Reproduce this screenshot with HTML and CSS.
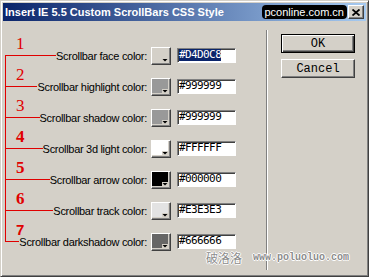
FILE: index.html
```html
<!DOCTYPE html>
<html>
<head>
<meta charset="utf-8">
<title>Insert IE 5.5 Custom ScrollBars CSS Style</title>
<link rel="stylesheet" href="styles.css">
</head>
<body>

<div class="win">
    <div class="titlebar">
        <span class="title">Insert IE 5.5 Custom ScrollBars CSS Style</span>
        <span class="badge">pconline.com.cn</span>
        <span class="close">
            <svg width="8" height="7" viewBox="0 0 8 7"><path d="M0.5 0.5 L7.5 6.5 M7.5 0.5 L0.5 6.5" stroke="#000" stroke-width="1.8"/></svg>
        </span>
    </div>

    <div class="main">
        <div class="form">
            <div class="tree">
                <div class="row">
                    <div class="lead"><span class="num">1</span></div>
                    <span class="label">Scrollbar face color:</span>
                    <span class="swatch"><svg width="16" height="14"><path d="M0 0 H16 V10 H10 V14 H0 Z" fill="#D4D0C8"/><path d="M10.5 11 H15.5 L13 13.5 Z" fill="#000"/></svg></span>
                    <span class="field"><span class="sel">#D4D0C8</span></span>
                </div>
                <div class="row">
                    <div class="lead"><span class="num">2</span></div>
                    <span class="label">Scrollbar highlight color:</span>
                    <span class="swatch"><svg width="16" height="14"><path d="M0 0 H16 V10 H10 V14 H0 Z" fill="#999999"/><path d="M10.5 11 H15.5 L13 13.5 Z" fill="#000"/></svg></span>
                    <span class="field">#999999</span>
                </div>
                <div class="row">
                    <div class="lead"><span class="num">3</span></div>
                    <span class="label">Scrollbar shadow color:</span>
                    <span class="swatch"><svg width="16" height="14"><path d="M0 0 H16 V10 H10 V14 H0 Z" fill="#999999"/><path d="M10.5 11 H15.5 L13 13.5 Z" fill="#000"/></svg></span>
                    <span class="field">#999999</span>
                </div>
                <div class="row">
                    <div class="lead"><span class="num bold">4</span></div>
                    <span class="label">Scrollbar 3d light color:</span>
                    <span class="swatch"><svg width="16" height="14"><path d="M0 0 H16 V10 H10 V14 H0 Z" fill="#FFFFFF"/><path d="M10.5 11 H15.5 L13 13.5 Z" fill="#000"/></svg></span>
                    <span class="field">#FFFFFF</span>
                </div>
                <div class="row">
                    <div class="lead"><span class="num bold">5</span></div>
                    <span class="label">Scrollbar arrow color:</span>
                    <span class="swatch"><svg width="16" height="14"><path d="M0 0 H16 V10 H10 V14 H0 Z" fill="#000000"/><path d="M10.5 11 H15.5 L13 13.5 Z" fill="#000"/></svg></span>
                    <span class="field">#000000</span>
                </div>
                <div class="row">
                    <div class="lead"><span class="num bold">6</span></div>
                    <span class="label">Scrollbar track color:</span>
                    <span class="swatch"><svg width="16" height="14"><path d="M0 0 H16 V10 H10 V14 H0 Z" fill="#E3E3E3"/><path d="M10.5 11 H15.5 L13 13.5 Z" fill="#000"/></svg></span>
                    <span class="field">#E3E3E3</span>
                </div>
                <div class="row">
                    <div class="lead"><span class="num sans">7</span></div>
                    <span class="label">Scrollbar darkshadow color:</span>
                    <span class="swatch"><svg width="16" height="14"><path d="M0 0 H16 V10 H10 V14 H0 Z" fill="#666666"/><path d="M10.5 11 H15.5 L13 13.5 Z" fill="#000"/></svg></span>
                    <span class="field">#666666</span>
                </div>
            </div>
        </div>

        <div class="sep"></div>

        <div class="actions">
            <button class="btn default">OK</button>
            <button class="btn">Cancel</button>
        </div>
    </div>

    <div class="mark"><span class="cn">破洛洛</span><span class="url">www.poluoluo.com</span></div>
</div>

</body>
</html>
```

FILE: styles.css
```css
body{
    margin: 0;
    background-color: #D4D0C8;
    font-family: "Liberation Sans", Arial, sans-serif;
}

.win{
    position: relative;
    width: 369px;
    height: 277px;
    box-sizing: border-box;
    padding: 2px;
    background-color: #D4D0C8;
    border: 1px solid;
    border-color: #D4D0C8 #404040 #404040 #D4D0C8;
    box-shadow: inset 1px 1px #ffffff, inset -1px -1px #808080;
}

/* title bar */
.titlebar{
    display: flex;
    align-items: center;
    height: 18px;
    padding-left: 2px;
    background: linear-gradient(to right, #0A246A, #A6CAF0);
}
.title{
    color: #ffffff;
    font-weight: bold;
    font-size: 11px;
}
.badge{
    margin-left: auto;
    height: 14px;
    line-height: 14px;
    padding: 0 3px;
    border-radius: 4px;
    background-color: #000000;
    color: #ffffff;
    font-size: 11px;
}
.close{
    display: flex;
    align-items: center;
    justify-content: center;
    width: 16px;
    height: 14px;
    margin-left: 1px;
    margin-right: 2px;
    box-sizing: border-box;
    background-color: #D4D0C8;
    border: 1px solid;
    border-color: #ffffff #404040 #404040 #ffffff;
    box-shadow: inset -1px -1px #808080;
}

/* body */
.main{
    display: flex;
    height: 253px;
}
.form{
    width: 263px;
    padding-top: 19px;
}
.tree{
    position: relative;
    margin-left: 2px;
    margin-right: 30px;
}
.tree::before{
    content: "";
    position: absolute;
    left: 0;
    top: 15px;
    bottom: 16px;
    width: 1px;
    background-color: #E00000;
}
.row{
    display: flex;
    align-items: center;
    height: 31px;
}
.lead{
    flex: 1;
    min-width: 0;
    align-self: stretch;
}
.num{
    display: block;
    height: 16px;
    box-sizing: border-box;
    padding-left: 11px;
    border-bottom: 1px solid #E00000;
    color: #E00000;
    font-family: "Liberation Serif", serif;
    font-size: 17px;
    line-height: 8px;
    white-space: nowrap;
}
.num.bold{
    font-weight: bold;
}
.num.sans{
    font-family: "Liberation Sans", sans-serif;
    font-weight: bold;
    font-size: 15px;
}
.label{
    flex-shrink: 0;
    white-space: nowrap;
    font-size: 11px;
    letter-spacing: -0.3px;
    color: #000000;
}
.swatch{
    display: flex;
    flex-shrink: 0;
    width: 20px;
    height: 18px;
    margin-left: 4px;
    box-sizing: border-box;
    border: 1px solid;
    border-color: #ffffff #404040 #404040 #ffffff;
    box-shadow: inset -1px -1px #808080;
}
.swatch svg{
    display: block;
}
.field{
    flex-shrink: 0;
    width: 59px;
    height: 15px;
    margin-left: 6px;
    box-sizing: border-box;
    padding-left: 1px;
    background-color: #ffffff;
    border: 1px solid;
    border-color: #808080 #ffffff #ffffff #808080;
    box-shadow: inset 1px 1px #404040;
    font-family: "DejaVu Sans Mono", monospace;
    font-size: 11px;
    letter-spacing: -0.6px;
    line-height: 12px;
    white-space: nowrap;
    overflow: hidden;
}
.sel{
    background-color: #0A246A;
    color: #ffffff;
}

.sep{
    width: 1px;
    margin-top: 9px;
    margin-bottom: 4px;
    background-color: #808080;
    border-right: 1px solid #ffffff;
}

.actions{
    display: flex;
    flex-direction: column;
    gap: 6px;
    padding-top: 13px;
    padding-left: 13px;
}
.btn{
    width: 74px;
    height: 19px;
    padding: 0;
    background-color: #D4D0C8;
    border: 1px solid;
    border-color: #ffffff #404040 #404040 #ffffff;
    box-shadow: inset -1px -1px #808080;
    font-family: "Liberation Mono", monospace;
    font-size: 12px;
    color: #000000;
}
.btn.default{
    border-color: #000000;
    box-shadow: inset 1px 1px #ffffff, inset -1px -1px #404040, inset -2px -2px #808080;
}

/* watermark over the corner */
.mark{
    position: absolute;
    left: 205px;
    top: 248px;
    display: flex;
    align-items: center;
    gap: 11px;
    color: #8c8c8c;
    text-shadow: 1px 0 #ffffff, -1px 0 #ffffff, 0 1px #ffffff, 0 -1px #ffffff;
}
.cn{
    font-family: "Noto Sans CJK SC", sans-serif;
    font-size: 12px;
}
.url{
    font-family: "Liberation Mono", monospace;
    font-size: 10px;
    font-weight: bold;
}
```
